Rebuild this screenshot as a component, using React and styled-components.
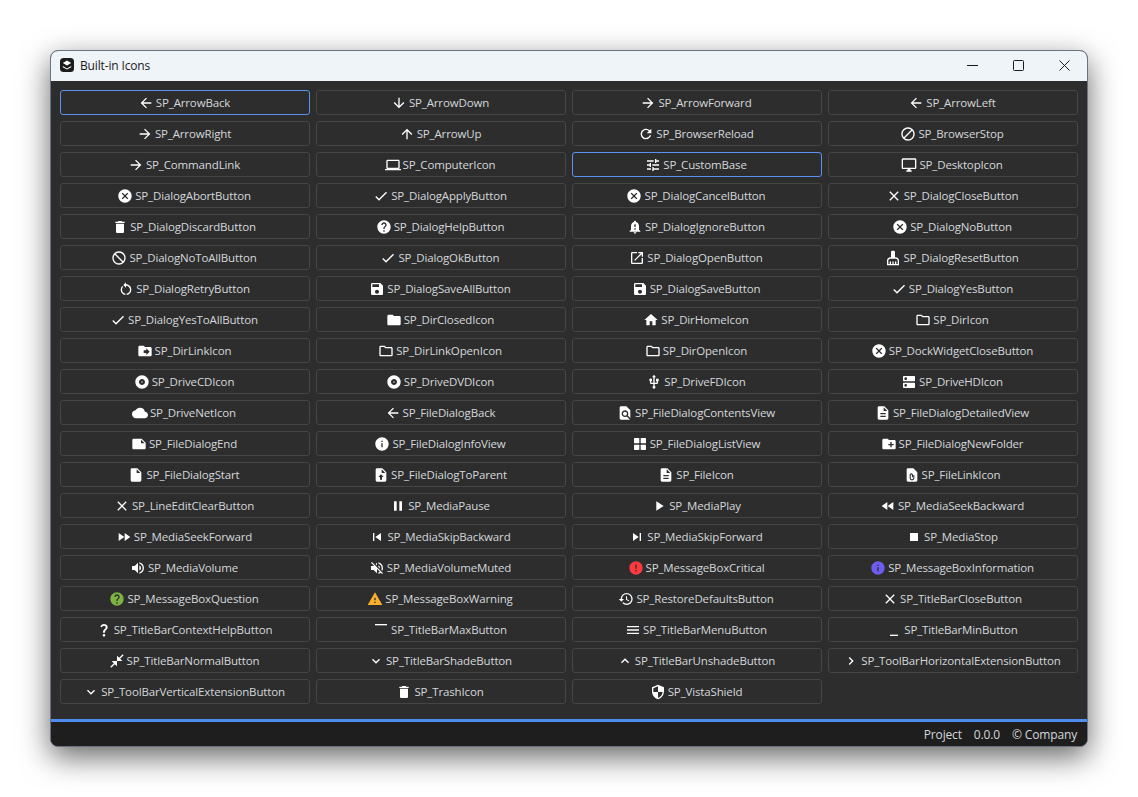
import React from 'react'
import styled, { createGlobalStyle } from 'styled-components'
import {
  MdArrowBack, MdArrowDownward, MdArrowForward, MdArrowUpward, MdRefresh, MdDoNotDisturbAlt, MdDoNotDisturb,
  MdLaptop, MdTune, MdOutlineDesktopWindows, MdCancel, MdCheck, MdClose, MdDelete, MdHelp,
  MdNotificationImportant, MdOpenInNew, MdCleaningServices, MdRestartAlt, MdSave,
  MdFolder, MdHome, MdDriveFileMove, MdAlbum, MdUsb, MdDns, MdCloud,
  MdFindInPage, MdDescription, MdNote, MdInfo, MdCreateNewFolder, MdInsertDriveFile,
  MdPause, MdPlayArrow, MdFastRewind, MdFastForward, MdSkipPrevious,
  MdSkipNext, MdStop, MdVolumeUp, MdVolumeOff, MdError, MdWarning, MdRestore, MdQuestionMark,
  MdMaximize, MdMenu, MdMinimize, MdCloseFullscreen, MdExpandMore, MdExpandLess, MdChevronRight,
  MdSecurity, MdOutlineFolder,
} from 'react-icons/md'

const GlobalStyle = createGlobalStyle`
  html, body {
    margin: 0;
    background: #fff;
  }
  * { box-sizing: border-box; }
`

const Desktop = styled.div`
  padding: 50px;
  width: 1138px;
  height: 797px;
  overflow: hidden;
`

const Window = styled.div`
  width: 1038px;
  height: 697px;
  display: flex;
  flex-direction: column;
  border: 1px solid #6b7280;
  border-radius: 8px;
  overflow: hidden;
  background: #2d2d2d;
  box-shadow: 0 10px 30px rgba(0, 0, 0, 0.6);
  font-family: "Open Sans", "Noto Sans", sans-serif;
  font-size: 11.5px;
  letter-spacing: -0.15px;
`

const TitleBar = styled.div`
  height: 30px;
  flex: none;
  display: flex;
  align-items: center;
  background: #eff4f9;
  color: #1a1a1a;
  padding: 0 0 2px 9px;
`

const AppLogo = styled.svg`
  width: 14px;
  height: 14px;
  margin-right: 6px;
`

const Title = styled.span`
  flex: 1;
  font-size: 12px;
`

const WinButton = styled.div`
  width: 46px;
  height: 28px;
  display: flex;
  align-items: center;
  justify-content: center;
  color: #1a1a1a;
`

const Content = styled.div`
  flex: 1;
  display: grid;
  grid-template-columns: repeat(4, 250px);
  grid-auto-rows: 25px;
  gap: 6px;
  padding: 9px;
  align-content: start;
  background: #2d2d2d;
`

const IconButton = styled.button`
  display: flex;
  align-items: center;
  justify-content: center;
  gap: 2px;
  padding: 0 2px 0 0;
  background: #2d2d2d;
  border: 1px solid ${p => (p.$focused ? '#5a93ee' : '#454545')};
  border-radius: 3px;
  color: #d4d8dc;
  font: inherit;
  letter-spacing: inherit;
`

const Glyph = styled.span`
  display: flex;
  color: ${p => p.$color || '#fff'};
`

const AccentLine = styled.div`
  height: 3px;
  flex: none;
  background: #4f8cf0;
`

const StatusBar = styled.div`
  height: 24px;
  flex: none;
  display: flex;
  align-items: center;
  justify-content: flex-end;
  gap: 12px;
  padding-right: 10px;
  background: #1e1e1e;
  color: #d4d8dc;
  font-size: 12px;
`

// icons the packages don't have in the filled form the reference uses
const GridIcon = ({ size }) => (
  <svg width={size} height={size} viewBox="0 0 24 24" fill="currentColor">
    <rect x="3" y="3" width="8" height="8" rx="1" />
    <rect x="13" y="3" width="8" height="8" rx="1" />
    <rect x="3" y="13" width="8" height="8" rx="1" />
    <rect x="13" y="13" width="8" height="8" rx="1" />
  </svg>
)

const FileUpIcon = ({ size }) => (
  <svg width={size} height={size} viewBox="0 0 24 24" fill="currentColor">
    <path fillRule="evenodd" d="M14 2H6c-1.1 0-2 .9-2 2v16c0 1.1.9 2 2 2h12c1.1 0 2-.9 2-2V8l-6-6zm-1 1.5L18.5 9H13V3.5zM12 11l4 4h-2.5v4h-3v-4H8l4-4z" />
  </svg>
)

const FileLinkIcon = ({ size }) => (
  <svg width={size} height={size} viewBox="0 0 24 24" fill="currentColor">
    <path fillRule="evenodd" d="M14 2H6c-1.1 0-2 .9-2 2v16c0 1.1.9 2 2 2h12c1.1 0 2-.9 2-2V8l-6-6zM11 9.5c-1.4 0-2.5 1.1-2.5 2.5v4.5c0 1.9 1.6 3.5 3.5 3.5s3.5-1.6 3.5-3.5V12h-1.6v4.5c0 1-.9 1.9-1.9 1.9s-1.9-.9-1.9-1.9V12c0-.5.4-.9.9-.9s.9.4.9.9v3.5h1.6V12c0-1.4-1.1-2.5-2.5-2.5z" />
  </svg>
)

const ITEMS = [
  ['SP_ArrowBack', MdArrowBack], ['SP_ArrowDown', MdArrowDownward], ['SP_ArrowForward', MdArrowForward], ['SP_ArrowLeft', MdArrowBack],
  ['SP_ArrowRight', MdArrowForward], ['SP_ArrowUp', MdArrowUpward], ['SP_BrowserReload', MdRefresh], ['SP_BrowserStop', MdDoNotDisturbAlt],
  ['SP_CommandLink', MdArrowForward], ['SP_ComputerIcon', MdLaptop], ['SP_CustomBase', MdTune], ['SP_DesktopIcon', MdOutlineDesktopWindows],
  ['SP_DialogAbortButton', MdCancel], ['SP_DialogApplyButton', MdCheck], ['SP_DialogCancelButton', MdCancel], ['SP_DialogCloseButton', MdClose],
  ['SP_DialogDiscardButton', MdDelete], ['SP_DialogHelpButton', MdHelp], ['SP_DialogIgnoreButton', MdNotificationImportant], ['SP_DialogNoButton', MdCancel],
  ['SP_DialogNoToAllButton', MdDoNotDisturb], ['SP_DialogOkButton', MdCheck], ['SP_DialogOpenButton', MdOpenInNew], ['SP_DialogResetButton', MdCleaningServices],
  ['SP_DialogRetryButton', MdRestartAlt], ['SP_DialogSaveAllButton', MdSave], ['SP_DialogSaveButton', MdSave], ['SP_DialogYesButton', MdCheck],
  ['SP_DialogYesToAllButton', MdCheck], ['SP_DirClosedIcon', MdFolder], ['SP_DirHomeIcon', MdHome], ['SP_DirIcon', MdOutlineFolder],
  ['SP_DirLinkIcon', MdDriveFileMove], ['SP_DirLinkOpenIcon', MdOutlineFolder], ['SP_DirOpenIcon', MdOutlineFolder], ['SP_DockWidgetCloseButton', MdCancel],
  ['SP_DriveCDIcon', MdAlbum], ['SP_DriveDVDIcon', MdAlbum], ['SP_DriveFDIcon', MdUsb], ['SP_DriveHDIcon', MdDns],
  ['SP_DriveNetIcon', MdCloud], ['SP_FileDialogBack', MdArrowBack], ['SP_FileDialogContentsView', MdFindInPage], ['SP_FileDialogDetailedView', MdDescription],
  ['SP_FileDialogEnd', MdNote], ['SP_FileDialogInfoView', MdInfo], ['SP_FileDialogListView', GridIcon], ['SP_FileDialogNewFolder', MdCreateNewFolder],
  ['SP_FileDialogStart', MdInsertDriveFile], ['SP_FileDialogToParent', FileUpIcon], ['SP_FileIcon', MdDescription], ['SP_FileLinkIcon', FileLinkIcon],
  ['SP_LineEditClearButton', MdClose], ['SP_MediaPause', MdPause], ['SP_MediaPlay', MdPlayArrow], ['SP_MediaSeekBackward', MdFastRewind],
  ['SP_MediaSeekForward', MdFastForward], ['SP_MediaSkipBackward', MdSkipPrevious], ['SP_MediaSkipForward', MdSkipNext], ['SP_MediaStop', MdStop],
  ['SP_MediaVolume', MdVolumeUp], ['SP_MediaVolumeMuted', MdVolumeOff], ['SP_MessageBoxCritical', MdError, '#f93a3f'], ['SP_MessageBoxInformation', MdInfo, '#6c5cf0'],
  ['SP_MessageBoxQuestion', MdHelp, '#7cb342'], ['SP_MessageBoxWarning', MdWarning, '#fbb02d'], ['SP_RestoreDefaultsButton', MdRestore], ['SP_TitleBarCloseButton', MdClose],
  ['SP_TitleBarContextHelpButton', MdQuestionMark], ['SP_TitleBarMaxButton', MdMaximize], ['SP_TitleBarMenuButton', MdMenu], ['SP_TitleBarMinButton', MdMinimize],
  ['SP_TitleBarNormalButton', MdCloseFullscreen], ['SP_TitleBarShadeButton', MdExpandMore], ['SP_TitleBarUnshadeButton', MdExpandLess], ['SP_ToolBarHorizontalExtensionButton', MdChevronRight],
  ['SP_ToolBarVerticalExtensionButton', MdExpandMore], ['SP_TrashIcon', MdDelete], ['SP_VistaShield', MdSecurity],
]

const FOCUSED = ['SP_ArrowBack', 'SP_CustomBase']

const App = () => (
  <Desktop>
    <GlobalStyle />
    <Window>
      <TitleBar>
        <AppLogo viewBox="0 0 14 14">
          <rect width="14" height="14" rx="3.5" fill="#1c1c1c" />
          <path d="M7 2.6 11.2 5 7 7.4 2.8 5Z" fill="#fff" />
          <path d="M2.8 8 7 10.4 11.2 8 11.2 9.2 7 11.6 2.8 9.2Z" fill="#fff" />
        </AppLogo>
        <Title>Built-in Icons</Title>
        <WinButton>
          <svg width="11" height="11" viewBox="0 0 11 11"><path d="M0 5.5h11" stroke="currentColor" /></svg>
        </WinButton>
        <WinButton>
          <svg width="11" height="11" viewBox="0 0 11 11"><rect x=".5" y=".5" width="10" height="10" rx="1" fill="none" stroke="currentColor" /></svg>
        </WinButton>
        <WinButton>
          <svg width="11" height="11" viewBox="0 0 11 11"><path d="M.5.5l10 10M10.5.5l-10 10" stroke="currentColor" /></svg>
        </WinButton>
      </TitleBar>
      <Content>
        {ITEMS.map(([name, Icon, color]) => (
          <IconButton key={name} $focused={FOCUSED.includes(name)}>
            <Glyph $color={color}><Icon size={16} /></Glyph>
            {name}
          </IconButton>
        ))}
      </Content>
      <AccentLine />
      <StatusBar>
        <span>Project</span>
        <span>0.0.0</span>
        <span>© Company</span>
      </StatusBar>
    </Window>
  </Desktop>
)

export default App
